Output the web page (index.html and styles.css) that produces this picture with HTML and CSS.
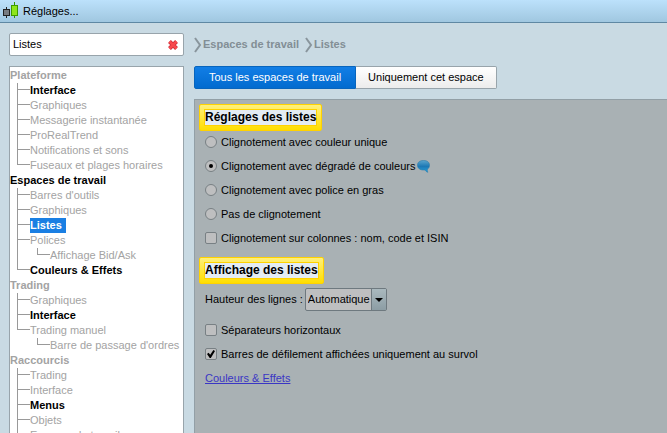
FILE: index.html
```html
<!DOCTYPE html>
<html lang="fr">
<head>
    <meta charset="UTF-8">
    <meta name="viewport" content="width=device-width, initial-scale=1.0">
    <title>Réglages...</title>
    <link rel="stylesheet" href="styles.css">
</head>
<body>
    <header class="titlebar">
        <svg class="logo" width="16" height="17" viewBox="0 0 16 17">
            <path d="M3.5 5v11" stroke="#222"/>
            <path d="M11.500 0v16" stroke="#2f9a00"/>
            <rect x=".5" y="7.500" width="6" height="6" fill="#777b80" stroke="#222"/>
            <rect x="8.500" y="3.500" width="6" height="10" fill="#8ee61c" stroke="#3f9a00"/>
        </svg>
        <h1>Réglages...</h1>
    </header>
    <div class="wrap">
        <aside class="side">
            <div class="search">
                <input type="text" value="Listes" aria-label="Rechercher">
                <button class="clear" aria-label="Effacer">
                    <svg width="10" height="10" viewBox="0 0 10 10">
                        <path d="M1.500 1.500l7 7M8.500 1.500l-7 7" stroke="#c92a35" stroke-width="4"/>
                        <path d="M1.500 1.500l7 7M8.500 1.500l-7 7" stroke="#f8484c" stroke-width="2.600"/>
                    </svg>
                </button>
            </div>
            <nav class="tree">
                <h2>Plateforme</h2>
                <ul>
                    <li><a class="found" href="#">Interface</a></li>
                    <li><a href="#">Graphiques</a></li>
                    <li><a href="#">Messagerie instantanée</a></li>
                    <li><a href="#">ProRealTrend</a></li>
                    <li><a href="#">Notifications et sons</a></li>
                    <li><a href="#">Fuseaux et plages horaires</a></li>
                </ul>
                <h2 class="found">Espaces de travail</h2>
                <ul>
                    <li><a href="#">Barres d'outils</a></li>
                    <li><a href="#">Graphiques</a></li>
                    <li><a class="active" href="#">Listes</a></li>
                    <li><a href="#">Polices</a>
                        <ul>
                            <li><a href="#">Affichage Bid/Ask</a></li>
                        </ul>
                    </li>
                    <li><a class="found" href="#">Couleurs &amp; Effets</a></li>
                </ul>
                <h2>Trading</h2>
                <ul>
                    <li><a href="#">Graphiques</a></li>
                    <li><a class="found" href="#">Interface</a></li>
                    <li><a href="#">Trading manuel</a>
                        <ul>
                            <li><a href="#">Barre de passage d'ordres</a></li>
                        </ul>
                    </li>
                </ul>
                <h2>Raccourcis</h2>
                <ul class="more">
                    <li><a href="#">Trading</a></li>
                    <li><a href="#">Interface</a></li>
                    <li><a class="found" href="#">Menus</a></li>
                    <li><a href="#">Objets</a></li>
                    <li><a href="#">Espaces de travail</a></li>
                </ul>
            </nav>
        </aside>
        <main class="main">
            <div class="crumbs">
                <svg width="9" height="16" viewBox="0 0 9 16"><path d="M1 1l5 7-5 7" fill="none" stroke="#89959c" stroke-width="2"/></svg>
                <span>Espaces de travail</span>
                <svg width="9" height="16" viewBox="0 0 9 16"><path d="M1 1l5 7-5 7" fill="none" stroke="#89959c" stroke-width="2"/></svg>
                <span>Listes</span>
            </div>
            <div class="tabs">
                <button class="on">Tous les espaces de travail</button>
                <button>Uniquement cet espace</button>
            </div>
            <form class="panel">
                <h3><span>Réglages des listes</span></h3>
                <label class="row"><input type="radio" name="blink">Clignotement avec couleur unique</label>
                <label class="row"><input type="radio" name="blink" checked>Clignotement avec dégradé de couleurs
                    <svg class="bubble" width="13" height="13" viewBox="0 0 13 13">
                        <defs>
                            <linearGradient id="blue" x1="0" y1="0" x2="0" y2="1">
                                <stop offset="0" stop-color="#5aa5cd"/>
                                <stop offset=".5" stop-color="#1d78b4"/>
                                <stop offset="1" stop-color="#27a2de"/>
                            </linearGradient>
                        </defs>
                        <path d="M6.500 .5C2.800 .5 .5 2.200 .5 5.200s2.300 4.800 6 4.800l1.500-.1c.4 1 1.400 1.800 2.800 2.400-.5-1-.6-2-.4-3.200 1.400-.8 2.100-2.200 2.100-3.900 0-3-2.300-4.700-6-4.700z" fill="url(#blue)" stroke="#2c7cab" stroke-width=".6"/>
                    </svg>
                </label>
                <label class="row"><input type="radio" name="blink">Clignotement avec police en gras</label>
                <label class="row"><input type="radio" name="blink">Pas de clignotement</label>
                <label class="row"><input type="checkbox">Clignotement sur colonnes : nom, code et ISIN</label>
                <h3 class="second"><span>Affichage des listes</span></h3>
                <div class="field">
                    <label for="height">Hauteur des lignes :</label>
                    <div class="drop">
                        <select id="height">
                            <option>Automatique</option>
                        </select>
                        <span class="arrow"></span>
                    </div>
                </div>
                <label class="row"><input type="checkbox">Séparateurs horizontaux</label>
                <label class="row"><input type="checkbox" checked>Barres de défilement affichées uniquement au survol</label>
                <p class="row"><a href="#">Couleurs &amp; Effets</a></p>
            </form>
        </main>
    </div>
</body>
</html>
```
FILE: styles.css
```css
*{
    margin: 0;
    padding: 0;
    box-sizing: border-box;
}
body{
    display: flex;
    flex-direction: column;
    height: 100vh;
    overflow: hidden;
    background: #c9dae3;
    font: 11px/15px "Liberation Sans", Arial, sans-serif;
    color: #000;
}
input,select,button{
    font: inherit;
    color: inherit;
}
h1,h2{
    font-size: 11px;
}
ul{
    list-style: none;
}
svg{
    display: block;
    flex: none;
}

/* title bar */
.titlebar{
    display: flex;
    flex: none;
    gap: 4px;
    height: 23px;
    padding: 2px 3px;
    background: linear-gradient(#bce1fb, #a0c7e0);
    border-bottom: 1px solid #5f88a3;
}
.titlebar h1{
    font-weight: normal;
    line-height: 19px;
}
.wrap{
    display: flex;
    flex: 1;
    gap: 10px;
    min-height: 0;
    padding: 10px 0 0 9px;
}

/* left column */
.side{
    flex: none;
    width: 175px;
}
.search{
    display: flex;
    align-items: center;
    height: 23px;
    margin-bottom: 10px;
    padding: 0 5px 0 3px;
    background: #fff;
    border: 1px solid #98a4ab;
    border-radius: 2px;
}
.search input{
    flex: 1;
    min-width: 0;
    border: 0;
    outline: 0;
    background: none;
}
.clear{
    border: 0;
    background: none;
}
.tree{
    padding-top: 1px;
    background: #fff;
    border: 1px solid #98a4ab;
    white-space: nowrap;
}
.tree h2{
    color: #a3a3a3;
}
.tree a{
    display: inline-block;
    height: 15px;
    vertical-align: top;
    color: #a3a3a3;
    text-decoration: none;
}
.tree ul{
    margin-left: 7px;
}
.tree li{
    padding-left: 13px;
    background: linear-gradient(#999, #999) 0 0 / 1px 100% no-repeat,
                linear-gradient(#999, #999) 0 6px / 13px 1px no-repeat;
}
.tree li:last-child{
    background-size: 1px 7px, 13px 1px;
}
.tree .more li:last-child{
    background-size: 1px 100%, 13px 1px;
}
.tree .found{
    color: #000;
    font-weight: bold;
}
.tree .active{
    padding-right: 4px;
    background: #1a7fe3;
    color: #fff;
    font-weight: bold;
}

/* right column */
.main{
    display: flex;
    flex: 1;
    flex-direction: column;
    min-width: 0;
}
.crumbs{
    display: flex;
    align-items: center;
    height: 23px;
    margin-bottom: 10px;
    color: #828e95;
    font-weight: bold;
}
.crumbs span{
    margin-right: 6px;
}
.tabs{
    display: flex;
    height: 23px;
    margin-bottom: 10px;
}
.tabs button{
    padding: 0 12px;
    background: linear-gradient(#fff, #ececec);
    border: 1px solid #98a4ab;
    border-left: 0;
    border-radius: 0 2px 2px 0;
}
.tabs .on{
    padding: 0 14px;
    background: linear-gradient(#127ee6, #026bcf);
    border: 1px solid #0865bd;
    border-radius: 2px 0 0 2px;
    color: #fff;
}
.panel{
    flex: 1;
    padding: 4px;
    background: #a9b1b4;
    border: 1px solid #929fa6;
    border-width: 1px 0 0 1px;
}
.panel h3{
    width: max-content;
    padding: 4px;
    background: linear-gradient(#fff07c, #ffde00);
    border: 1px solid #ffd200;
    border-radius: 2px;
    font-size: 12px;
}
.panel h3 span{
    display: block;
    background: #e4ecf3;
    border: 1px solid #ffd200;
}
.panel .second{
    margin-top: 6px;
}
.row{
    display: flex;
    align-items: center;
    height: 24px;
    padding: 0 0 2px 6px;
}
.row input{
    display: grid;
    place-items: center;
    width: 12px;
    height: 12px;
    margin-right: 4px;
    appearance: none;
    background: #bebfc0;
    border: 1px solid #788084;
    border-radius: 2px;
}
.row input[type="radio"]{
    border-radius: 50%;
}
.row input:checked::before{
    content: "";
    width: 4px;
    height: 4px;
    background: #000;
    border-radius: 50%;
}
.row input[type="checkbox"]:checked::before{
    width: 8px;
    height: 8px;
    border-radius: 0;
    clip-path: polygon(0 50%, 20% 35%, 40% 58%, 80% 0, 100% 12%, 48% 100%, 34% 100%);
}
.bubble{
    margin-left: 2px;
}
.row a{
    color: #3a36c4;
}
.field{
    display: flex;
    align-items: center;
    gap: 2px;
    margin: 4px 0 8px;
    padding-left: 6px;
}
.drop{
    position: relative;
}
.drop select{
    display: block;
    height: 23px;
    padding: 0 16px 0 2px;
    appearance: none;
    background: #bebfc0;
    border: 1px solid #6e797f;
    border-radius: 2px;
    outline: 0;
}
.arrow{
    position: absolute;
    top: 1px;
    right: 1px;
    bottom: 1px;
    display: grid;
    place-items: center;
    width: 15px;
    background: linear-gradient(#aab9be, #8c9da4);
    border-left: 1px solid #6e797f;
    pointer-events: none;
}
.arrow::before{
    content: "";
    border: 4px solid transparent;
    border-top-color: #000;
    border-bottom: 0;
}
```
